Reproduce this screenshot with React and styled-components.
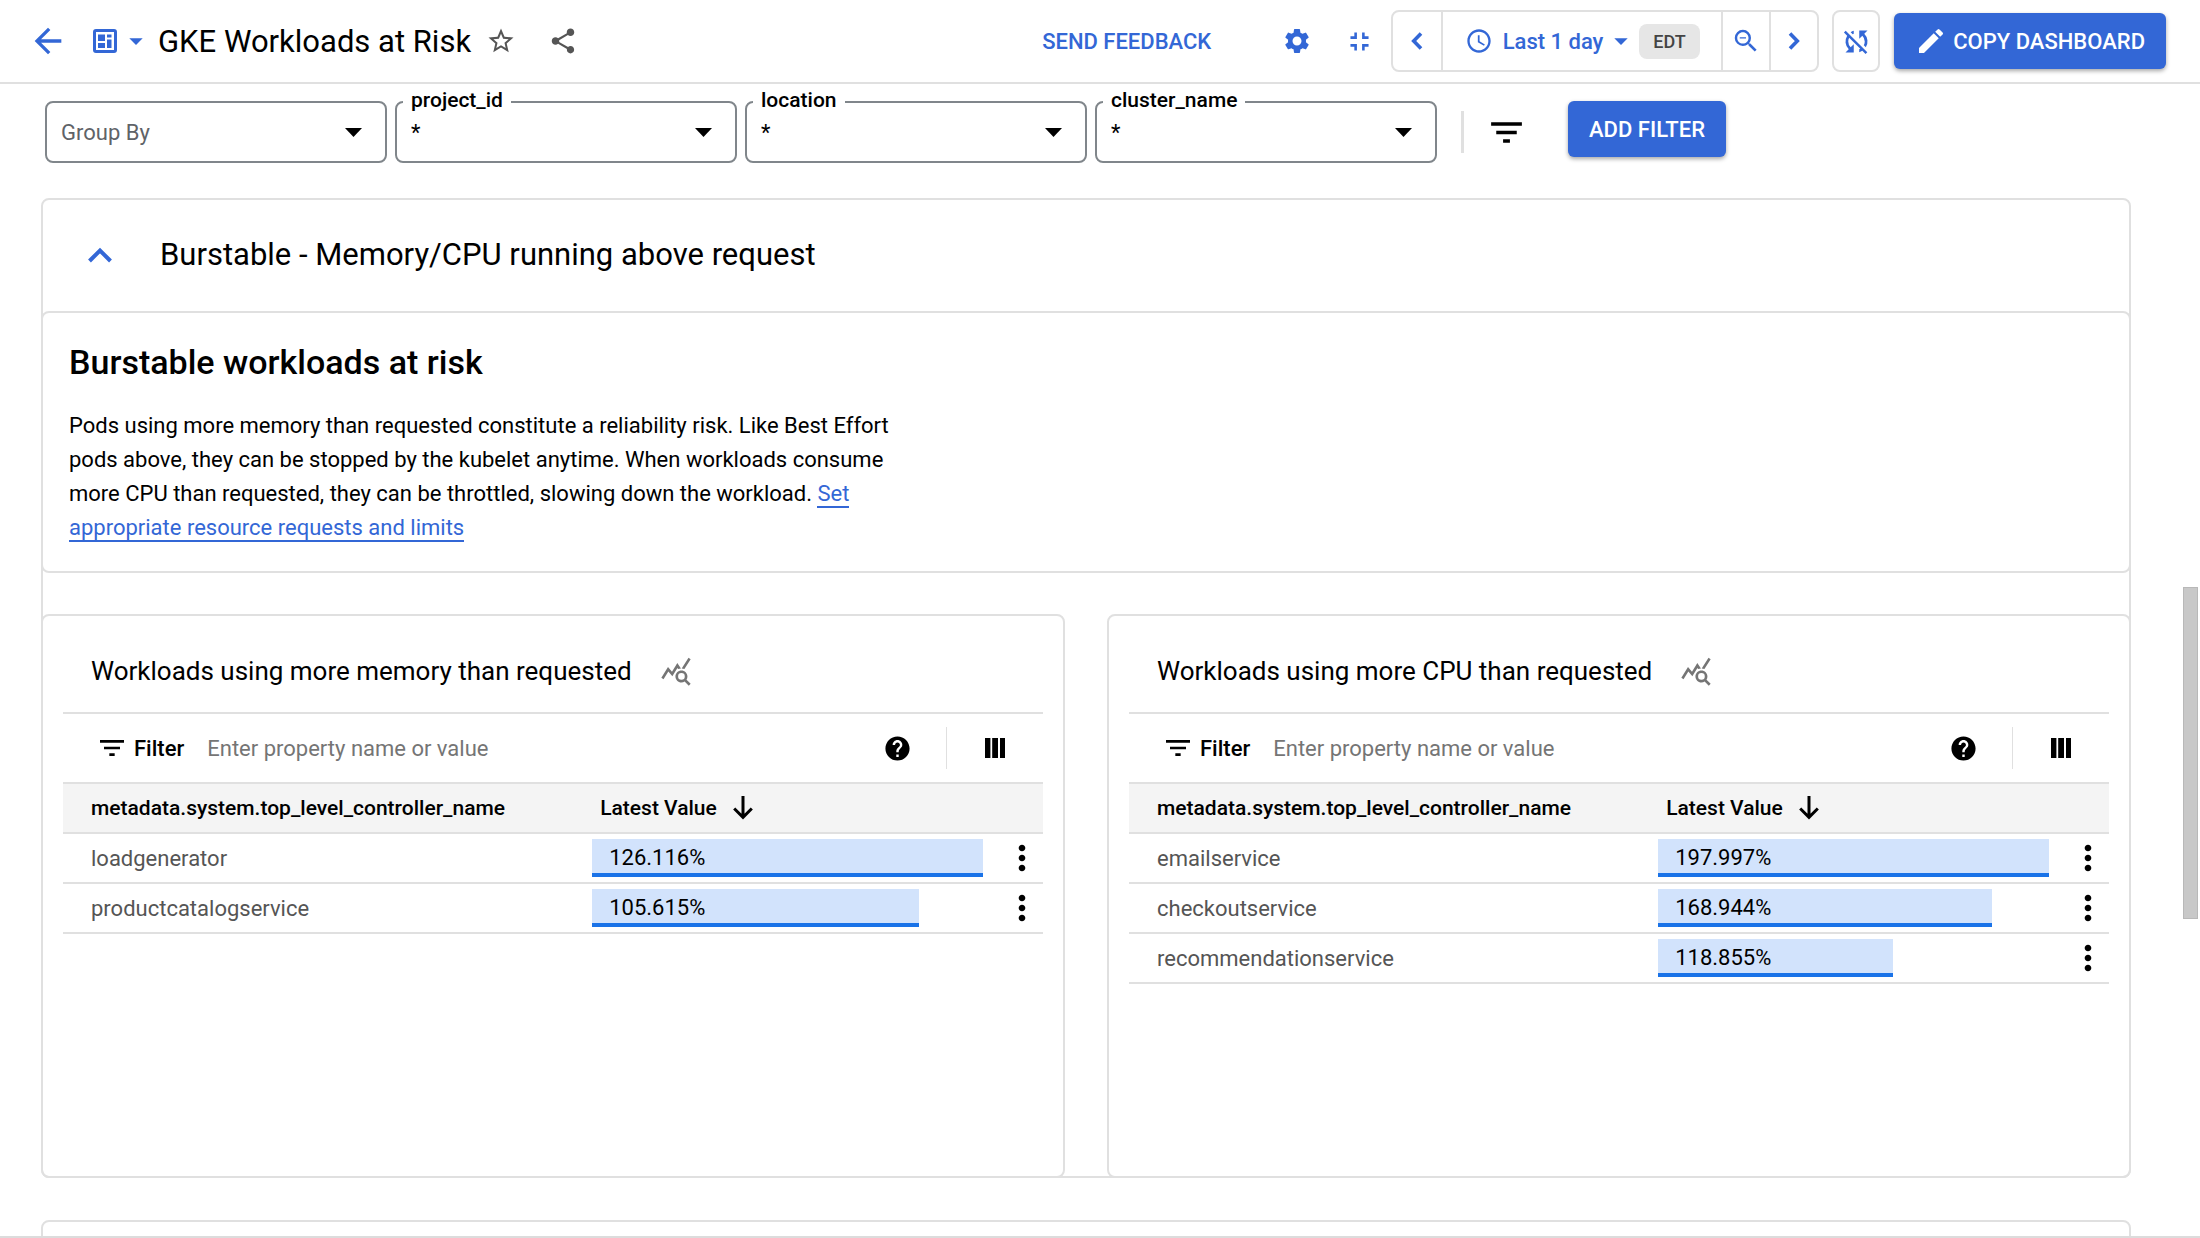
import React, { useState } from "react";
import styled, { createGlobalStyle } from "styled-components";
import {
  MdArrowBack,
  MdArrowDropDown,
  MdStarBorder,
  MdShare,
  MdSettings,
  MdFullscreenExit,
  MdAccessTime,
  MdZoomOut,
  MdSyncDisabled,
  MdEdit,
  MdFilterList,
  MdQueryStats,
  MdHelp,
  MdMoreVert,
} from "react-icons/md";

const GlobalStyle = createGlobalStyle`
  * {
    box-sizing: border-box;
  }
  body {
    margin: 0;
    background-color: #fff;
    color: #000;
    font-family: Roboto, "Liberation Sans", sans-serif;
    font-size: 22px;
  }
  button, input, select {
    font-family: inherit;
    font-size: inherit;
    color: inherit;
  }
`;

const Page = styled.div`
  height: 100vh;
  display: flex;
  flex-direction: column;
  overflow: hidden;
  position: relative;
  border-bottom: 2px solid #dcdcdc;
`;

const Header = styled.header`
  height: 84px;
  flex-shrink: 0;
  display: flex;
  align-items: center;
  padding: 0 34px 0 28px;
  border-bottom: 2px solid #e0e0e0;
  color: #3367d6;
`;

const IconButton = styled.button`
  display: flex;
  align-items: center;
  justify-content: center;
  flex-shrink: 0;
  width: ${(props) => props.$width || 40}px;
  height: 40px;
  padding: 0;
  border: none;
  background: none;
  color: ${(props) => props.$color || "#3367d6"};
  cursor: pointer;
`;

const MenuButton = styled(IconButton)`
  justify-content: flex-end;
  gap: 3px;
`;

const Title = styled.h1`
  margin: 0 13px 0 6px;
  font-size: 31px;
  font-weight: 400;
  color: #000;
  white-space: nowrap;
`;

const Spacer = styled.div`
  flex: 1;
`;

const TextButton = styled.button`
  border: none;
  background: none;
  padding: 0;
  margin-right: 44px;
  color: #3367d6;
  font-weight: 500;
  white-space: nowrap;
  cursor: pointer;
`;

const TimeRange = styled.div`
  display: flex;
  height: 62px;
  margin-left: 12px;
  border: 2px solid #e0e0e0;
  border-radius: 8px;
`;

const Segment = styled.button`
  display: flex;
  align-items: center;
  justify-content: center;
  width: ${(props) => (props.$wide ? "280px" : "48px")};
  padding: 0;
  border: none;
  border-left: ${(props) => (props.$first ? "none" : "2px solid #e0e0e0")};
  background: none;
  color: #3367d6;
  font-weight: 500;
  white-space: nowrap;
  cursor: pointer;
`;

const RangeText = styled.span`
  margin: 0 2px 0 10px;
`;

const Zone = styled.span`
  margin-left: 2px;
  padding: 0 14px;
  border-radius: 8px;
  background-color: #e6e6e6;
  color: #444;
  font-size: 18px;
  line-height: 35px;
`;

const RefreshButton = styled.button`
  display: flex;
  align-items: center;
  justify-content: center;
  width: 48px;
  height: 62px;
  margin: 0 14px 0 13px;
  padding: 0;
  border: 2px solid #e0e0e0;
  border-radius: 8px;
  background: none;
  color: #3367d6;
  cursor: pointer;
`;

const PrimaryButton = styled.button`
  display: flex;
  align-items: center;
  gap: 6px;
  height: 56px;
  padding: 0 21px;
  border: none;
  border-radius: 6px;
  background-color: #3367d6;
  box-shadow: 0 2px 4px rgba(0, 0, 0, 0.35);
  color: #fff;
  font-weight: 500;
  white-space: nowrap;
  cursor: pointer;
`;

const Main = styled.main`
  flex: 1;
  min-height: 0;
  overflow: hidden;
  padding: 17px 69px 0 41px;
`;

const Filters = styled.div`
  display: flex;
  gap: 8px;
  padding-left: 4px;
`;

const Field = styled.div`
  position: relative;
  width: 342px;
  color: ${(props) => (props.$muted ? "#5f6368" : "#000")};
`;

const FieldLabel = styled.label`
  position: absolute;
  top: -14px;
  left: 8px;
  padding: 0 8px;
  background-color: #fff;
  font-size: 21px;
  font-weight: 500;
  line-height: 26px;
`;

const Select = styled.select`
  width: 100%;
  height: 62px;
  padding: 0 14px;
  border: 2px solid #80868b;
  border-radius: 8px;
  background-color: #fff;
  appearance: none;
`;

const Caret = styled.svg`
  position: absolute;
  top: 27px;
  right: 25px;
  width: 17px;
  height: 9px;
  fill: #000;
  pointer-events: none;
`;

const FilterTools = styled.div`
  display: flex;
  align-items: center;
  height: 62px;
  margin: 0 12px 0 16px;
`;

const Divider = styled.div`
  width: ${(props) => props.$width}px;
  height: 42px;
  background-color: #e0e0e0;
`;

const Section = styled.section`
  margin-top: ${(props) => props.$gap}px;
  border: 2px solid #e0e0e0;
  border-radius: 8px;
`;

const SectionHeader = styled.div`
  display: flex;
  align-items: center;
  gap: 40px;
  height: 111px;
  padding: 0 0 2px 37px;
`;

const SectionTitle = styled.h2`
  margin: 0;
  font-size: 31px;
  font-weight: 400;
`;

const Card = styled.div`
  border: 2px solid #e0e0e0;
  border-radius: 8px;
`;

const TextCard = styled(Card)`
  margin: 0 -2px;
  padding: 28px 26px 26px;
`;

const CardHeading = styled.h3`
  margin: 0 0 26px;
  font-size: 34px;
  font-weight: 500;
  line-height: 42px;
`;

const Paragraph = styled.p`
  max-width: 850px;
  margin: 0;
  line-height: 34px;
`;

const Link = styled.a`
  color: #3367d6;
  text-decoration: none;
  border-bottom: 2px solid #3367d6;
`;

const Widgets = styled.div`
  display: grid;
  grid-template-columns: 1fr 1fr;
  gap: 42px;
  margin: 41px -2px -2px;
`;

const Widget = styled(Card)`
  min-height: 564px;
  padding: 0 20px;
`;

const WidgetHeader = styled.div`
  display: flex;
  align-items: center;
  gap: 24px;
  height: 98px;
  padding: 14px 0 0 28px;
  border-bottom: 2px solid #e0e0e0;
`;

const WidgetTitle = styled.h4`
  margin: 0;
  font-size: 26px;
  font-weight: 400;
`;

const TableToolbar = styled.div`
  display: flex;
  align-items: center;
  height: 68px;
  padding-left: 33px;
`;

const FilterLabel = styled.label`
  display: flex;
  align-items: center;
  gap: 6px;
  font-weight: 500;
`;

const FilterInput = styled.input`
  flex: 1;
  min-width: 0;
  margin-left: 23px;
  padding: 0;
  border: none;
  outline: none;
  background: none;
  &::placeholder {
    color: #757575;
    opacity: 1;
  }
`;

const Table = styled.table`
  width: 100%;
  table-layout: fixed;
  border-collapse: collapse;
`;

const HeadCell = styled.th`
  width: ${(props) => props.$width || "auto"};
  height: 50px;
  padding: 0 0 0 ${(props) => props.$indent || 0}px;
  border-top: 2px solid #e0e0e0;
  border-bottom: 2px solid #e0e0e0;
  background-color: #f4f4f4;
  font-size: 21px;
  font-weight: 500;
  text-align: left;
`;

const SortButton = styled.button`
  display: flex;
  align-items: center;
  gap: 16px;
  padding: 0;
  border: none;
  background: none;
  font-weight: 500;
  cursor: pointer;
`;

const Cell = styled.td`
  height: 50px;
  padding: 0 0 0 ${(props) => props.$indent || 0}px;
  border-bottom: 2px solid #e0e0e0;
  color: #555;
`;

const Bar = styled.div`
  height: 38px;
  padding-left: 17px;
  border-bottom: 4px solid #1a73e8;
  background-color: #d2e3fc;
  color: #000;
  line-height: 38px;
`;

const Thumb = styled.div`
  position: absolute;
  top: 587px;
  right: 2px;
  width: 15px;
  height: 332px;
  border: 1px solid #b8b8b8;
  background-color: #c8c8c8;
`;

const filters = [
  { id: "project_id", label: "project_id" },
  { id: "location", label: "location" },
  { id: "cluster_name", label: "cluster_name" },
];

const widgets = [
  {
    id: "memory",
    title: "Workloads using more memory than requested",
    rows: [
      { name: "loadgenerator", value: 126.116 },
      { name: "productcatalogservice", value: 105.615 },
    ],
  },
  {
    id: "cpu",
    title: "Workloads using more CPU than requested",
    rows: [
      { name: "emailservice", value: 197.997 },
      { name: "checkoutservice", value: 168.944 },
      { name: "recommendationservice", value: 118.855 },
    ],
  },
];

const DashboardIcon = () => (
  <svg width="24" height="24" viewBox="0 0 24 24">
    <rect x="1.5" y="1.5" width="21" height="21" rx="1.5" fill="none" stroke="currentColor" strokeWidth="3" />
    <path fill="currentColor" d="M5 5.500h7v6.500h-7zM5 14h7v5h-7zM14 5.500h4.500v3h-4.500zM14 10.500h4.500v8.500h-4.500z" />
  </svg>
);

const Chevron = ({ flip }) => (
  <svg width="12" height="18" viewBox="0 0 12 18" fill="none" stroke="currentColor" strokeWidth="3.6">
    <path d={flip ? "M2 1.500L9.300 9L2 16.500" : "M10 1.500L2.700 9L10 16.500"} />
  </svg>
);

const CollapseIcon = () => (
  <svg width="24" height="16" viewBox="0 0 24 16" fill="none" stroke="currentColor" strokeWidth="4">
    <path d="M1.500 14L12 3.500L22.500 14" />
  </svg>
);

const ColumnsIcon = () => (
  <svg width="20" height="20" viewBox="0 0 20 20" fill="currentColor">
    <path d="M0 0h5.400v20H0zM7.200 0h5.800v20H7.200zM15 0h5v20h-5z" />
  </svg>
);

const SortArrow = () => (
  <svg width="20" height="24" viewBox="0 0 20 24" fill="none" stroke="currentColor" strokeWidth="3">
    <path d="M10 0v21M1.200 12.500L10 21.300L18.800 12.500" />
  </svg>
);

const TableWidget = ({ id, title, rows }) => {
  const [query, setQuery] = useState("");
  const max = Math.max(...rows.map((row) => row.value));

  return (
    <Widget>
      <WidgetHeader>
        <WidgetTitle>{title}</WidgetTitle>
        <IconButton $color="#757575" aria-label="Explore data">
          <MdQueryStats size={32} />
        </IconButton>
      </WidgetHeader>
      <TableToolbar>
        <FilterLabel htmlFor={`${id}-filter`}>
          <MdFilterList size={32} />
          Filter
        </FilterLabel>
        <FilterInput
          id={`${id}-filter`}
          placeholder="Enter property name or value"
          value={query}
          onChange={(e) => setQuery(e.target.value)}
        />
        <IconButton $color="#000" $width={98} aria-label="Help">
          <MdHelp size={29} />
        </IconButton>
        <Divider $width={1} />
        <IconButton $color="#000" $width={96} aria-label="Columns">
          <ColumnsIcon />
        </IconButton>
      </TableToolbar>
      <Table>
        <thead>
          <tr>
            <HeadCell $width="54%" $indent={28}>metadata.system.top_level_controller_name</HeadCell>
            <HeadCell $indent={8}>
              <SortButton>
                Latest Value
                <SortArrow />
              </SortButton>
            </HeadCell>
            <HeadCell $width="60px" />
          </tr>
        </thead>
        <tbody>
          {rows.map((row) => (
            <tr key={row.name}>
              <Cell $indent={28}>{row.name}</Cell>
              <Cell>
                <Bar style={{ width: `${(row.value / max) * 100}%` }}>{row.value}%</Bar>
              </Cell>
              <Cell $indent={19}>
                <IconButton $color="#000" aria-label={`${row.name} actions`}>
                  <MdMoreVert size={42} />
                </IconButton>
              </Cell>
            </tr>
          ))}
        </tbody>
      </Table>
    </Widget>
  );
};

const App = () => {
  return (
    <Page>
      <GlobalStyle />
      <Header>
        <IconButton aria-label="Back">
          <MdArrowBack size={40} />
        </IconButton>
        <MenuButton $width={84} aria-label="Dashboards">
          <DashboardIcon />
          <MdArrowDropDown size={32} />
        </MenuButton>
        <Title>GKE Workloads at Risk</Title>
        <IconButton $color="#555" $width={34} aria-label="Star">
          <MdStarBorder size={30} />
        </IconButton>
        <IconButton $color="#555" $width={90} aria-label="Share">
          <MdShare size={30} />
        </IconButton>
        <Spacer />
        <TextButton>SEND FEEDBACK</TextButton>
        <IconButton $width={84} aria-label="Settings">
          <MdSettings size={30} />
        </IconButton>
        <IconButton aria-label="Exit full screen">
          <MdFullscreenExit size={31} />
        </IconButton>
        <TimeRange>
          <Segment $first aria-label="Earlier">
            <Chevron />
          </Segment>
          <Segment $wide>
            <MdAccessTime size={28} />
            <RangeText>Last 1 day</RangeText>
            <MdArrowDropDown size={32} />
            <Zone>EDT</Zone>
          </Segment>
          <Segment aria-label="Zoom out">
            <MdZoomOut size={30} />
          </Segment>
          <Segment aria-label="Later">
            <Chevron flip />
          </Segment>
        </TimeRange>
        <RefreshButton aria-label="Auto refresh off">
          <MdSyncDisabled size={33} />
        </RefreshButton>
        <PrimaryButton>
          <MdEdit size={32} />
          COPY DASHBOARD
        </PrimaryButton>
      </Header>
      <Main>
        <Filters>
          <Field $muted>
            <Select aria-label="Group By">
              <option>Group By</option>
            </Select>
            <Caret viewBox="0 0 17 9">
              <path d="M0 0h17L8.500 9z" />
            </Caret>
          </Field>
          {filters.map((filter) => (
            <Field key={filter.id}>
              <Select id={filter.id}>
                <option>*</option>
              </Select>
              <FieldLabel htmlFor={filter.id}>{filter.label}</FieldLabel>
              <Caret viewBox="0 0 17 9">
                <path d="M0 0h17L8.500 9z" />
              </Caret>
            </Field>
          ))}
          <FilterTools>
            <Divider $width={3} />
            <IconButton $color="#000" $width={84} aria-label="Filters">
              <MdFilterList size={41} />
            </IconButton>
          </FilterTools>
          <PrimaryButton>ADD FILTER</PrimaryButton>
        </Filters>
        <Section $gap={35}>
          <SectionHeader>
            <IconButton aria-label="Collapse section">
              <CollapseIcon />
            </IconButton>
            <SectionTitle>Burstable - Memory/CPU running above request</SectionTitle>
          </SectionHeader>
          <TextCard>
            <CardHeading>Burstable workloads at risk</CardHeading>
            <Paragraph>
              Pods using more memory than requested constitute a reliability risk. Like Best Effort pods above, they can
              be stopped by the kubelet anytime. When workloads consume more CPU than requested, they can be throttled,
              slowing down the workload. <Link href="#">Set appropriate resource requests and limits</Link>
            </Paragraph>
          </TextCard>
          <Widgets>
            {widgets.map((widget) => (
              <TableWidget key={widget.id} {...widget} />
            ))}
          </Widgets>
        </Section>
        <Section $gap={42}>
          <SectionHeader />
        </Section>
      </Main>
      <Thumb />
    </Page>
  );
};

export default App;
